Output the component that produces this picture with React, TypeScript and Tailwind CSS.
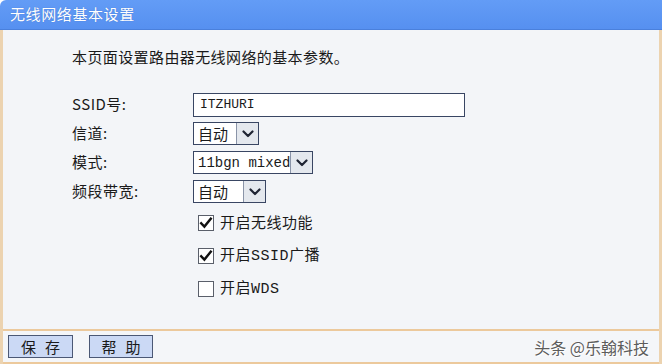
import React from 'react';

const FONT = { fontFamily: '"Noto Sans CJK SC", "Noto Sans", sans-serif' };
const MONO = { fontFamily: '"Liberation Mono", "Noto Sans CJK SC", monospace' };

const Chevron: React.FC = () => (
  <svg width="12" height="8" viewBox="0 0 12 8">
    <path d="M1.5 1.5 L6 6 L10.5 1.5" fill="none" stroke="#1f2433" strokeWidth="2.2" strokeLinecap="round" strokeLinejoin="round" />
  </svg>
);

interface SelectBoxProps {
  value: string;
  textWidth: string;
  mono?: boolean;
}

const SelectBox: React.FC<SelectBoxProps> = ({ value, textWidth, mono }) => (
  <div className="flex h-[23px] border border-[#394663] bg-white">
    <div
      className={`${textWidth} flex items-center pl-[4px] whitespace-nowrap text-[#1a1a1a] leading-none ${mono ? 'text-[14px]' : 'text-[15px]'}`}
      style={mono ? MONO : FONT}
    >
      {value}
    </div>
    <div className="w-[22px] flex items-center justify-center bg-[#e4e8ee] border-l border-[#8a94a8]">
      <Chevron />
    </div>
  </div>
);

const CheckBox: React.FC<{ checked: boolean; label: React.ReactNode }> = ({ checked, label }) => (
  <div className="flex items-center h-[33px]">
    <div className="w-[16px] h-[16px] border border-[#5a5f6a] bg-white flex items-center justify-center">
      {checked && (
        <svg width="14" height="14" viewBox="0 0 14 14">
          <path d="M2.2 7.2 L5.4 10.6 L11.8 2.6" fill="none" stroke="#111" strokeWidth="2.4" strokeLinecap="square" />
        </svg>
      )}
    </div>
    <span className="ml-[6px] text-[15px] text-[#1a1a1a] tracking-[0.5px]">{label}</span>
  </div>
);

const Row: React.FC<{ label: string; children: React.ReactNode }> = ({ label, children }) => (
  <div className="flex items-center h-[29px]">
    <div className="w-[121px] text-[15px] text-[#1a1a1a] tracking-[0.5px]">{label}</div>
    {children}
  </div>
);

export default function App() {
  return (
    <div className="w-[662px] h-[364px] bg-white overflow-hidden flex flex-col" style={FONT}>
      <div className="h-[30px] shrink-0 bg-gradient-to-b from-[#639cf6] to-[#5690f0] border-b border-[#4a80dc] rounded-tl-[6px] flex items-center pl-[10px]">
        <span className="text-white text-[15px] tracking-[0.6px]" style={{ textShadow: '0 0 1px #3b6cc4' }}>
          无线网络基本设置
        </span>
      </div>

      <div className="flex-1 flex flex-col bg-[#f3f5f8] border-l-[3px] border-r-[3px] border-[#ecd3b0]">
        <div className="flex-1 pl-[69px] pt-[16px]">
          <div className="text-[15px] text-[#1a1a1a] tracking-[0.4px] h-[22px] leading-[22px]">
            本页面设置路由器无线网络的基本参数。
          </div>

          <div className="mt-[22px]">
            <Row label="SSID号:">
              <div className="w-[272px] h-[24px] border border-[#394663] bg-white flex items-center pl-[6px] text-[13px] text-[#1a1a1a]" style={MONO}>
                ITZHURI
              </div>
            </Row>
            <Row label="信道:">
              <SelectBox value="自动" textWidth="w-[42px]" />
            </Row>
            <Row label="模式:">
              <SelectBox value="11bgn mixed" textWidth="w-[96px]" mono />
            </Row>
            <Row label="频段带宽:">
              <SelectBox value="自动" textWidth="w-[49px]" />
            </Row>
          </div>

          <div className="ml-[126px]">
            <CheckBox checked label="开启无线功能" />
            <CheckBox checked label={<>开启<span style={MONO}>SSID</span>广播</>} />
            <CheckBox checked={false} label={<>开启<span style={MONO}>WDS</span></>} />
          </div>
        </div>

        <div className="h-[35px] shrink-0 border-t-2 border-b-2 border-[#ecc99c] bg-[#f4f6f9] flex items-center pl-[5px] pr-[10px]">
          <button className="w-[65px] h-[23px] bg-[#cbd9f5] border border-[#4b5875] text-[15px] text-[#1a1a1a] tracking-[9px] pl-[9px]">
            保存
          </button>
          <button className="ml-[16px] w-[64px] h-[23px] bg-[#cbd9f5] border border-[#4b5875] text-[15px] text-[#1a1a1a] tracking-[9px] pl-[9px]">
            帮助
          </button>
          <span
            className="ml-auto text-[16px] text-[#5c5c5c]"
            style={{ textShadow: '0 0 2px #fff, 0 0 1px #fff, 1px 1px 0 #fff' }}
          >
            头条 @乐翰科技
          </span>
        </div>
      </div>
    </div>
  );
}
